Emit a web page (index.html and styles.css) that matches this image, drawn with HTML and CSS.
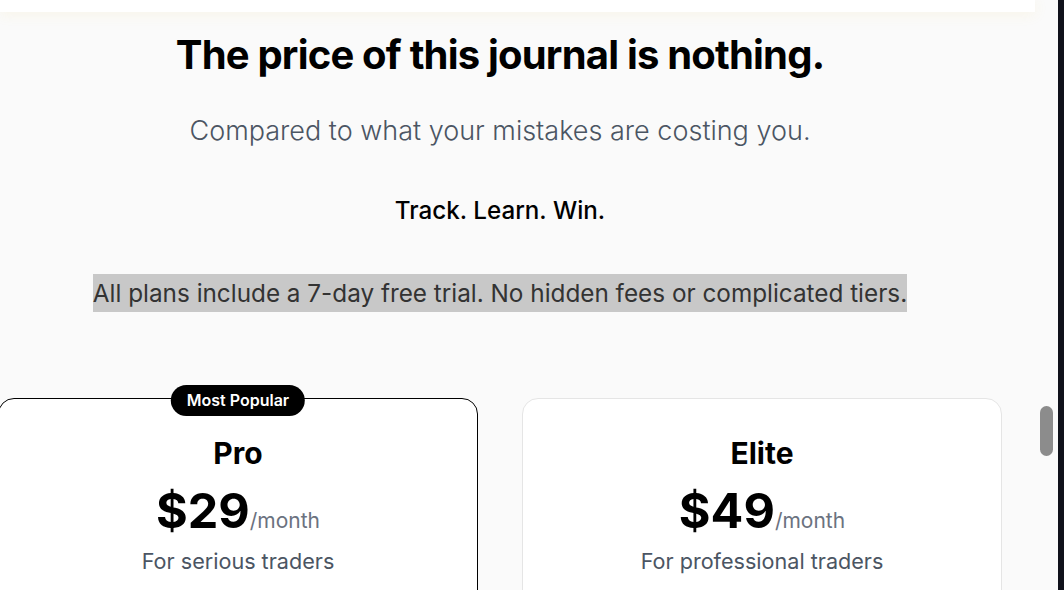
FILE: index.html
```html
<!DOCTYPE html>
<html lang="en">
<head>
<meta charset="utf-8">
<title>Pricing</title>
<link rel="stylesheet" href="styles.css">
</head>
<body>
<div class="window">
  <div class="page">
    <div class="topbar"></div>
    <main class="content">
      <h1 class="title">The price of this journal is nothing.</h1>
      <p class="subtitle">Compared to what your mistakes are costing you.</p>
      <p class="motto">Track. Learn. Win.</p>
      <p class="note"><span class="note-hl">All plans include a 7-day free trial. No hidden fees or complicated tiers.</span></p>
      <div class="plans">
        <div class="plan plan-featured">
          <span class="badge">Most Popular</span>
          <h2 class="plan-name">Pro</h2>
          <div class="price"><span class="amount">$29</span><span class="period">/month</span></div>
          <p class="plan-desc">For serious traders</p>
        </div>
        <div class="plan">
          <h2 class="plan-name">Elite</h2>
          <div class="price"><span class="amount">$49</span><span class="period">/month</span></div>
          <p class="plan-desc">For professional traders</p>
        </div>
      </div>
    </main>
  </div>
  <div class="scrollbar"><div class="thumb"></div></div>
  <div class="edge"></div>
</div>
</body>
</html>
```

FILE: styles.css
```css
* { box-sizing: border-box; }
html, body { margin: 0; padding: 0; }
body {
  font-family: Inter, "Noto Sans", "Liberation Sans", sans-serif;
  background: #fafafa;
  color: #000;
  overflow: hidden;
}
.window {
  display: flex;
  width: 1064px;
  height: 590px;
  overflow: hidden;
}
.page {
  width: 1035px;
  flex: none;
  display: flex;
  flex-direction: column;
  background: #fafafa;
}
.topbar {
  flex: none;
  height: 12px;
  background: #ffffff;
  box-shadow: 0 2px 14px rgba(234, 200, 60, 0.1);
  position: relative;
  z-index: 1;
}
.content {
  flex: none;
  width: 1004px;
  margin-left: -2px;
  text-align: center;
}
.title {
  margin: 19px 0 0;
  font-size: 40px;
  line-height: 48px;
  font-weight: 700;
  letter-spacing: -0.02em;
  color: #000;
}
.subtitle {
  margin: 36px 0 0;
  font-size: 27px;
  line-height: 32px;
  font-weight: 300;
  color: #4b5563;
}
.motto {
  margin: 49px 0 0;
  font-size: 24.2px;
  line-height: 30px;
  font-weight: 500;
  color: #000;
}
.note {
  margin: 48px 0 0;
  font-size: 24.3px;
  line-height: 38px;
  color: #333333;
}
.note-hl {
  display: inline-block;
  background: #c8c8c8;
}
.plans {
  margin-top: 86px;
  display: grid;
  grid-template-columns: 480px 480px;
  column-gap: 44px;
}
.plan {
  position: relative;
  height: 400px;
  background: #ffffff;
  border: 1px solid #e5e5e5;
  border-radius: 16px;
  padding-top: 36px;
}
.plan-featured {
  border-color: #000;
}
.badge {
  position: absolute;
  top: -14px;
  left: 50%;
  transform: translateX(-50%);
  background: #000;
  color: #fff;
  font-size: 16px;
  font-weight: 600;
  line-height: 31px;
  height: 31px;
  padding: 0 16px;
  border-radius: 999px;
  white-space: nowrap;
}
.plan-name {
  margin: 0;
  font-size: 30px;
  line-height: 36px;
  font-weight: 700;
  color: #000;
}
.price {
  margin-top: 16px;
  height: 48px;
  line-height: 48px;
}
.amount {
  font-size: 48.5px;
  font-weight: 700;
  color: #000;
}
.period {
  font-size: 21px;
  line-height: 20px;
  color: #6b7280;
}
.plan-desc {
  margin: 12px 0 0;
  font-size: 21.6px;
  line-height: 28px;
  color: #4b5563;
}
.scrollbar {
  width: 23px;
  flex: none;
  background: #fafafa;
  padding: 406px 0 0 5px;
}
.thumb {
  width: 13px;
  height: 50px;
  border-radius: 7px;
  background: #8c8c8c;
}
.edge {
  width: 6px;
  flex: none;
  background: #0f111a;
}
```
